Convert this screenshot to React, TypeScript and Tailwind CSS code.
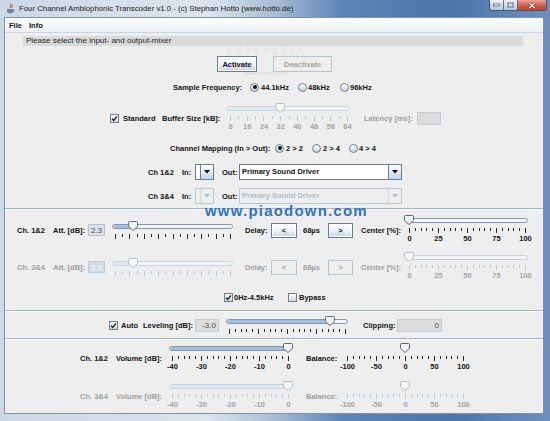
import React from "react";

type Kids = { children?: React.ReactNode };

function L({ c = "", d = false, children }: { c?: string; d?: boolean } & Kids) {
  return (
    <span
      className={`shrink-0 whitespace-nowrap text-[7.5px] leading-[9px] font-bold ${
        d ? "text-[#9e9e9e]" : "text-[#141414]"
      } ${c}`}
    >
      {children}
    </span>
  );
}

function Radio({ on = false, c = "" }: { on?: boolean; c?: string }) {
  return (
    <span
      className={`shrink-0 w-[9px] h-[9px] rounded-full border border-[#6f7f90] bg-gradient-to-b from-white to-[#c3d3e4] flex items-center justify-center ${c}`}
    >
      {on && <span className="w-[4px] h-[4px] rounded-full bg-[#111]" />}
    </span>
  );
}

function Check({ on = false, c = "" }: { on?: boolean; c?: string }) {
  return (
    <span
      className={`shrink-0 w-[9px] h-[9px] border border-[#6f7f90] bg-gradient-to-b from-white to-[#cbd8e6] flex items-center justify-center ${c}`}
    >
      {on && (
        <svg width="7" height="7" viewBox="0 0 7 7">
          <path d="M1 3.6 L2.7 5.4 L6 1.3" stroke="#1c1c1c" strokeWidth="1.3" fill="none" />
        </svg>
      )}
    </span>
  );
}

function Btn({ d = false, c = "", children }: { d?: boolean; c?: string } & Kids) {
  return (
    <span
      className={`shrink-0 flex items-center justify-center border text-[7.5px] font-bold leading-[9px] ${
        d
          ? "border-[#b9c3ce] bg-[#eeeeee] text-[#a3a3a3]"
          : "border-[#6c7d92] bg-gradient-to-b from-white via-[#eef3f9] to-[#c2d4e7] text-[#111] shadow-[inset_0_0_0_1px_#ffffff]"
      } ${c}`}
    >
      {children}
    </span>
  );
}

function Combo({ d = false, c = "", text = "" }: { d?: boolean; c?: string; text?: string }) {
  return (
    <span
      className={`shrink-0 flex h-[16px] border ${
        d ? "border-[#bcc6d1] bg-[#eeeeee]" : "border-[#6c7d92] bg-white"
      } ${c}`}
    >
      <span
        className={`flex-1 min-w-0 flex items-center pl-[2px] overflow-hidden whitespace-nowrap text-[7.5px] font-bold ${
          d ? "text-[#a9bdd3]" : "text-[#111]"
        }`}
      >
        {text}
      </span>
      <span
        className={`w-[13px] shrink-0 flex items-center justify-center border-l ${
          d ? "border-[#d4dbe3] bg-[#eeeeee]" : "border-[#6c7d92] bg-gradient-to-b from-white to-[#c4d5e7]"
        }`}
      >
        <svg width="6" height="4" viewBox="0 0 6 4">
          <path d="M0 0 H6 L3 3.5 Z" fill={d ? "#a9bdd3" : "#000"} />
        </svg>
      </span>
    </span>
  );
}

function Field({ c = "", d = false, blue = false, children }: { c?: string; d?: boolean; blue?: boolean } & Kids) {
  return (
    <span
      className={`shrink-0 flex items-center justify-end pr-[2px] border text-[8px] leading-[9px] ${
        blue
          ? d
            ? "bg-[#d3dce6] border-[#bfcddb]"
            : "bg-[#dbe2ea] border-[#b3c3d4]"
          : "bg-[#dcdcdc] border-[#c4ccd5]"
      } ${d ? "text-[#ffffff]" : "text-[#4a4a4a]"} ${c}`}
    >
      {children}
    </span>
  );
}

type SP = {
  w: number;
  v: number;
  n: number;
  major: number;
  labels?: string[];
  d?: boolean;
  track?: boolean;
  c?: string;
};

function Slider({ w, v, n, major, labels, d = false, track = true, c = "" }: SP) {
  const a = 5;
  const b = w - 5;
  const tx = (i: number) => Math.round(a + ((b - a) * i) / (n - 1)) + 0.5;
  const thumbX = a + (b - a) * v;
  const tick = d ? "#bac8d7" : "#2b2b2b";
  const t0 = thumbX - 5;
  return (
    <div className={`relative shrink-0 ${labels ? "h-[30px]" : "h-[18px]"} ${c}`}>
      <svg width={w} height={19} className="absolute left-0 top-0">
        {track && (
          <>
            <rect
              x={2.5}
              y={3.5}
              width={w - 5}
              height={4}
              rx={2}
              fill={d ? "#f3f5f8" : "#f5f8fb"}
              stroke={d ? "#c8d3de" : "#8698ae"}
            />
            {thumbX - 3 > 0 && (
              <rect x={3} y={4} width={thumbX - 3} height={3} rx={1.5} fill={d ? "#e3e9f0" : "#a6bfdb"} />
            )}
          </>
        )}
        {Array.from({ length: n }).map((_, i) => {
          const M = i % major === 0;
          return <line key={i} x1={tx(i)} x2={tx(i)} y1={13} y2={M ? 18 : 16} stroke={tick} strokeWidth={1} />;
        })}
        <path
          transform={`translate(${t0},0)`}
          d="M1.5 0.5 H8.5 A1 1 0 0 1 9.5 1.5 V5.5 L5 9.5 L0.5 5.5 V1.5 A1 1 0 0 1 1.5 0.5 Z"
          fill={d ? "#f4f6f8" : "#f1f4f8"}
          stroke={d ? "#b3bdc8" : "#5d6a79"}
        />
      </svg>
      {labels &&
        labels.map((t, i) => (
          <span
            key={i}
            className={`absolute top-[20px] -translate-x-1/2 whitespace-nowrap text-[7.5px] leading-[8px] font-bold ${
              d ? "text-[#a3a3a3]" : "text-[#141414]"
            }`}
            style={{ left: a + ((b - a) * i) / (labels.length - 1) + 0.5 }}
          >
            {t}
          </span>
        ))}
    </div>
  );
}

function Sep({ c = "" }: { c?: string }) {
  return (
    <div className={`shrink-0 ${c}`}>
      <div className="h-px bg-[#9fb2c9]" />
      <div className="h-px bg-white" />
    </div>
  );
}

function AttRow({ d = false, c = "" }: { d?: boolean; c?: string }) {
  return (
    <div className={`h-[30px] flex items-center pl-[12px] shrink-0 ${c}`}>
      <L d={d} c="w-[30px]">{d ? "Ch. 3&4" : "Ch. 1&2"}</L>
      <L d={d} c="ml-[6px] w-[33px]">Att. [dB]:</L>
      <Field d={d} blue c="ml-[2px] w-[17px] h-[12px]">2.3</Field>
      <Slider c="ml-[5px] w-[125px]" w={125} n={17} major={2} v={0.157} d={d} />
      <L d={d} c="ml-[10px] w-[23px]">Delay:</L>
      <Btn d={d} c="ml-[3px] w-[26px] h-[15px]">&lt;</Btn>
      <L d={d} c="ml-[6px] w-[18px]">68µs</L>
      <Btn d={d} c="ml-[7px] w-[25px] h-[15px]">&gt;</Btn>
      <L d={d} c="ml-[8px] w-[39px]">Center [%]:</L>
      <Slider
        c="ml-[4px] w-[126px]"
        w={126}
        n={21}
        major={5}
        v={0}
        d={d}
        labels={["0", "25", "50", "75", "100"]}
      />
    </div>
  );
}

function VolRow({ d = false, c = "" }: { d?: boolean; c?: string }) {
  return (
    <div className={`h-[30px] flex items-center pl-[75px] shrink-0 ${c}`}>
      <L d={d} c="w-[29px]">{d ? "Ch. 3&4" : "Ch. 1&2"}</L>
      <L d={d} c="ml-[7px] w-[48px]">Volume [dB]:</L>
      <Slider
        c="ml-[3px] w-[126px]"
        w={126}
        n={21}
        major={5}
        v={1}
        d={d}
        labels={["-40", "-30", "-20", "-10", "0"]}
      />
      <L d={d} c="ml-[13px] w-[32px]">Balance:</L>
      <Slider
        c="ml-[4px] w-[126px]"
        w={126}
        n={21}
        major={5}
        v={0.5}
        d={d}
        track={false}
        labels={["-100", "-50", "0", "50", "100"]}
      />
    </div>
  );
}

export default function App() {
  return (
    <div className="relative w-[550px] h-[421px] overflow-hidden font-['Liberation_Sans',Arial,sans-serif] bg-[linear-gradient(90deg,#cdd8e5_0%,#dce4ed_38%,#a9bcd4_50%,#5f84b6_62%,#4b74ab_82%,#6f90be_100%)]">
      {/* title bar */}
      <div className="h-[17px] flex items-center relative">
        <svg width="9" height="11" viewBox="0 0 9 11" className="ml-[6px] shrink-0">
          <path d="M4.5 0.5 C6 2 3 3 4.5 5 M6 1.5 C7 3 5 3.5 6 5" stroke="#d24a26" strokeWidth="1" fill="none" />
          <path d="M1 6 H7.5 V8 C7.5 9.5 6.5 10.5 4.2 10.5 C2 10.5 1 9.5 1 8 Z" fill="#6d84a8" />
          <path d="M7.5 6.5 C9 6.5 9 8.5 7.2 8.5" stroke="#6d84a8" strokeWidth="0.8" fill="none" />
        </svg>
        <span className="ml-[4px] text-[7.8px] leading-[10px] text-[#1a1a1a] whitespace-nowrap">
          Four Channel Ambiophonic Transcoder v1.0 - (c) Stephan Hotto (www.hotto.de)
        </span>
        <div className="absolute top-0 right-[3px] flex h-[11px] rounded-b-[3px] border border-t-0 border-[#44566e] overflow-hidden">
          <div className="w-[14px] h-full bg-gradient-to-b from-[#eef3f9] to-[#b3c6dc] flex items-center justify-center border-r border-[#5d6f88]">
            <svg width="7" height="4" viewBox="0 0 7 4">
              <rect x="0.5" y="1" width="6" height="2" fill="#fff" stroke="#3d4b5e" strokeWidth="0.7" />
            </svg>
          </div>
          <div className="w-[14px] h-full bg-gradient-to-b from-[#eef3f9] to-[#b3c6dc] flex items-center justify-center border-r border-[#5d6f88]">
            <svg width="7" height="6" viewBox="0 0 7 6">
              <rect x="0.8" y="0.8" width="5.4" height="4.4" fill="none" stroke="#3d4b5e" strokeWidth="1.2" />
              <rect x="0.8" y="0.8" width="5.4" height="4.4" fill="none" stroke="#fff" strokeWidth="0.5" />
            </svg>
          </div>
          <div className="w-[28px] h-full bg-gradient-to-b from-[#eaa594] via-[#d3644f] to-[#c2402b] flex items-center justify-center">
            <svg width="8" height="7" viewBox="0 0 8 7">
              <path d="M1 0.8 L7 6.2 M7 0.8 L1 6.2" stroke="#4a1a12" strokeWidth="2.2" />
              <path d="M1 0.8 L7 6.2 M7 0.8 L1 6.2" stroke="#ffffff" strokeWidth="1.2" />
            </svg>
          </div>
        </div>
      </div>

      {/* client area */}
      <div className="ml-[4px] w-[540px] h-[397px] border border-[#7f92ab] bg-[#eeeeee] flex flex-col overflow-hidden">
        {/* menu bar */}
        <div className="h-[15px] shrink-0 border-b border-[#cfd5dc] bg-gradient-to-b from-white to-[#eceff3] flex items-center">
          <L c="ml-[4px] w-[12px]">File</L>
          <L c="ml-[8px] w-[15px]">Info</L>
        </div>

        {/* status */}
        <div className="mt-[3px] ml-[18px] w-[500px] h-[10px] shrink-0 bg-[#dadada] flex items-center pl-[3px] text-[8px] leading-[10px] text-[#262626] whitespace-nowrap">
          Please select the input- and output-mixer
        </div>

        {/* buttons */}
        <div className="mt-[10px] h-[16px] shrink-0 flex pl-[212px]">
          <Btn c="w-[40px] h-[16px]">Activate</Btn>
          <Btn d c="ml-[16px] w-[59px] h-[16px]">Deactivate</Btn>
        </div>

        {/* sample frequency */}
        <div className="mt-[9px] h-[12px] shrink-0 flex items-center pl-[168px]">
          <L c="w-[70px]">Sample Frequency:</L>
          <Radio on c="ml-[7px]" />
          <L c="ml-[2px] w-[29px]">44.1kHz</L>
          <Radio c="ml-[8px]" />
          <L c="ml-[1px] w-[24px]">48kHz</L>
          <Radio c="ml-[8px]" />
          <L c="ml-[1px] w-[24px]">96kHz</L>
        </div>

        {/* buffer */}
        <div className="mt-[10px] h-[30px] shrink-0 flex items-center pl-[105px]">
          <Check on />
          <L c="ml-[4px] w-[33px]">Standard</L>
          <L c="ml-[6px] w-[58px]">Buffer Size [kB]:</L>
          <Slider
            c="ml-[5px] w-[127px]"
            w={127}
            n={15}
            major={2}
            v={0.4286}
            d
            labels={["8", "16", "24", "32", "40", "48", "56", "64"]}
          />
          <L d c="ml-[12px] w-[49px]">Latency [ms]:</L>
          <Field c="ml-[4px] w-[24px] h-[13px]" />
        </div>

        {/* channel mapping */}
        <div className="mt-[9px] h-[12px] shrink-0 flex items-center pl-[165px]">
          <L c="w-[98px]">Channel Mapping (In &gt; Out):</L>
          <Radio on c="ml-[7px]" />
          <L c="ml-[2px] w-[18px]">2 &gt; 2</L>
          <Radio c="ml-[8px]" />
          <L c="ml-[2px] w-[18px]">2 &gt; 4</L>
          <Radio c="ml-[8px]" />
          <L c="ml-[1px] w-[18px]">4 &gt; 4</L>
        </div>

        {/* combos */}
        <div className="mt-[10px] h-[16px] shrink-0 flex items-center pl-[143px]">
          <L c="w-[28px]">Ch 1&amp;2</L>
          <L c="ml-[6px] w-[10px]">In:</L>
          <Combo c="ml-[3px] w-[19px]" />
          <L c="ml-[8px] w-[16px]">Out:</L>
          <Combo c="ml-[1px] w-[163px]" text="Primary Sound Driver" />
        </div>
        <div className="mt-[8px] h-[16px] shrink-0 flex items-center pl-[143px]">
          <L c="w-[28px]">Ch 3&amp;4</L>
          <L c="ml-[6px] w-[10px]">In:</L>
          <Combo d c="ml-[3px] w-[19px]" />
          <L c="ml-[8px] w-[16px]">Out:</L>
          <Combo d c="ml-[1px] w-[163px]" text="Primary Sound Driver" />
        </div>

        <Sep c="mt-[4px]" />

        <AttRow c="mt-[5px]" />
        <AttRow d c="mt-[7px]" />

        {/* filter row */}
        <div className="mt-[9px] h-[12px] shrink-0 flex items-center pl-[219px]">
          <Check on />
          <L c="ml-[1px] w-[44px]">0Hz-4.5kHz</L>
          <Check c="ml-[10px]" />
          <L c="ml-[2px] w-[28px]">Bypass</L>
        </div>

        <Sep c="mt-[7px]" />

        {/* leveling */}
        <div className="mt-[4px] h-[18px] shrink-0 flex items-center pl-[104px]">
          <Check on />
          <L c="ml-[3px] w-[17px]">Auto</L>
          <L c="ml-[5px] w-[50px]">Leveling [dB]:</L>
          <Field c="ml-[2px] w-[24px] h-[13px]">-3.0</Field>
          <Slider c="ml-[5px] w-[126px]" w={126} n={21} major={5} v={0.87} />
          <L c="ml-[13px] w-[32px]">Clipping:</L>
          <Field c="ml-[2px] w-[45px] h-[13px]">0</Field>
        </div>

        <Sep c="mt-[4px]" />

        <VolRow c="mt-[3px]" />
        <VolRow d c="mt-[8px]" />
      </div>

      {/* watermarks */}
      <span className="absolute left-[226px] top-[47px] text-[10px] leading-[10px] font-bold tracking-[2.5px] text-[#f2f2f2] [-webkit-text-stroke:0.3px_#dadada] whitespace-nowrap">
        SOFTPEDIA
      </span>
      <span className="absolute left-[245px] top-[71px] text-[5px] leading-[5px] text-[#dcdcdc] whitespace-nowrap">
        www.softpedia.com
      </span>
      <span className="absolute left-[205px] top-[203px] text-[15px] leading-[16px] font-bold tracking-[1.2px] text-[#3474bf] whitespace-nowrap">
        www.piaodown.com
      </span>
    </div>
  );
}
